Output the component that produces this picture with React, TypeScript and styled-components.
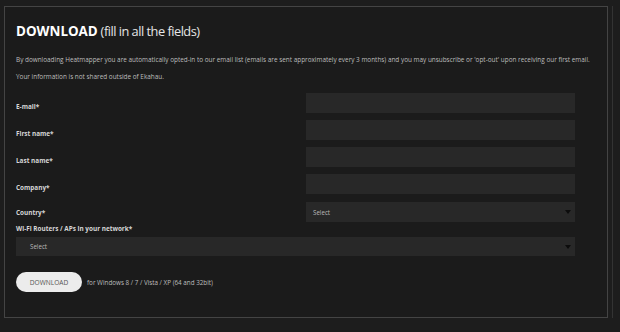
import React from 'react';
import styled, { createGlobalStyle } from 'styled-components';

const GlobalStyle = createGlobalStyle`
    html, body {
        margin: 0;
        padding: 0;
        background: #1d1d1d;
    }
    body {
        font-family: "Open Sans", "Liberation Sans", sans-serif;
    }
`;

const Page = styled.div`
    width: 620px;
    height: 332px;
    box-sizing: border-box;
    padding: 6px 0 0 4px;
    display: flex;
    gap: 4px;
`;

const Panel = styled.section`
    width: 604px;
    height: 312px;
    box-sizing: border-box;
    border: 1px solid #444;
    background: #1b1b1b;
    padding: 14px 32px 0 11px;
`;

const ScrollTrack = styled.div`
    width: 2px;
    height: 312px;
    border-left: 1px solid #333;
`;

const Title = styled.h1`
    margin: 0;
    font-size: 12.8px;
    line-height: 20px;
    color: #e6e6e6;
    font-weight: 400;
    letter-spacing: -0.5px;

    strong {
        font-size: 13.4px;
        font-weight: 700;
        color: #fff;
        letter-spacing: 0;
    }
`;

const Note = styled.p`
    margin: 0;
    font-size: 6.4px;
    line-height: 17px;
    color: #bdbdbd;
    white-space: nowrap;

    &:first-of-type {
        margin-top: 10px;
    }
`;

const Form = styled.form`
    margin-top: 8px;
    display: grid;
    grid-template-columns: 290px 269px;
    row-gap: 7px;
    align-items: center;
`;

const Label = styled.label<{ $variant?: 'field' | 'select' | 'wide' }>`
    font-size: 6.4px;
    font-weight: 700;
    color: #d6d6d6;
    padding-top: ${p => (p.$variant === 'field' || !p.$variant ? '6px' : '0')};
    ${p => p.$variant === 'select' && 'margin-top: 1px;'}
    ${p => p.$variant === 'wide' && 'grid-column: 1 / -1; margin-top: -5px; margin-bottom: -3px;'}
`;

const Input = styled.input`
    height: 20px;
    box-sizing: border-box;
    border: none;
    outline: none;
    background: #282828;
    color: #ddd;
    padding: 0 8px;
`;

const SelectBox = styled.div<{ $wide?: boolean }>`
    position: relative;
    height: ${p => (p.$wide ? '19px' : '20px')};
    box-sizing: border-box;
    background: #282828;
    display: flex;
    align-items: center;
    padding-left: ${p => (p.$wide ? '14px' : '7px')};
    font-size: 6.2px;
    color: #bbb;
    ${p => (p.$wide ? 'grid-column: 1 / -1;' : 'margin-top: 1px;')}
`;

const Arrow = styled.span`
    position: absolute;
    right: 4px;
    top: 50%;
    transform: translateY(-50%);
    width: 0;
    height: 0;
    border-left: 3px solid transparent;
    border-right: 3px solid transparent;
    border-top: 4px solid #0c0c0c;
`;

const Actions = styled.div`
    grid-column: 1 / -1;
    display: flex;
    align-items: center;
    gap: 5px;
    margin-top: 9px;
`;

const DownloadButton = styled.button`
    width: 66px;
    height: 20px;
    border: none;
    border-radius: 10px;
    background: #ececec;
    color: #555;
    font-family: "Open Sans", "Liberation Sans", sans-serif;
    font-size: 6.6px;
    padding: 0;
`;

const Platforms = styled.span`
    font-size: 6.3px;
    color: #bdbdbd;
`;

const textFields = ['E-mail*', 'First name*', 'Last name*', 'Company*'];

export default function App() {
    return (
        <>
            <GlobalStyle />
            <Page>
                <Panel>
                    <Title>
                        <strong>DOWNLOAD</strong> (fill in all the fields)
                    </Title>
                    <Note>
                        By downloading Heatmapper you are automatically opted-in to our email list (emails are sent approximately every 3 months) and you may unsubscribe or 'opt-out' upon receiving our first email.
                    </Note>
                    <Note>Your information is not shared outside of Ekahau.</Note>
                    <Form onSubmit={e => e.preventDefault()}>
                        {textFields.map(name => (
                            <React.Fragment key={name}>
                                <Label $variant="field">{name}</Label>
                                <Input type="text" />
                            </React.Fragment>
                        ))}
                        <Label $variant="select">Country*</Label>
                        <SelectBox>
                            Select
                            <Arrow />
                        </SelectBox>
                        <Label $variant="wide">Wi-Fi Routers / APs in your network*</Label>
                        <SelectBox $wide>
                            Select
                            <Arrow />
                        </SelectBox>
                        <Actions>
                            <DownloadButton type="submit">DOWNLOAD</DownloadButton>
                            <Platforms>for Windows 8 / 7 / Vista / XP (64 and 32bit)</Platforms>
                        </Actions>
                    </Form>
                </Panel>
                <ScrollTrack />
            </Page>
        </>
    );
}
